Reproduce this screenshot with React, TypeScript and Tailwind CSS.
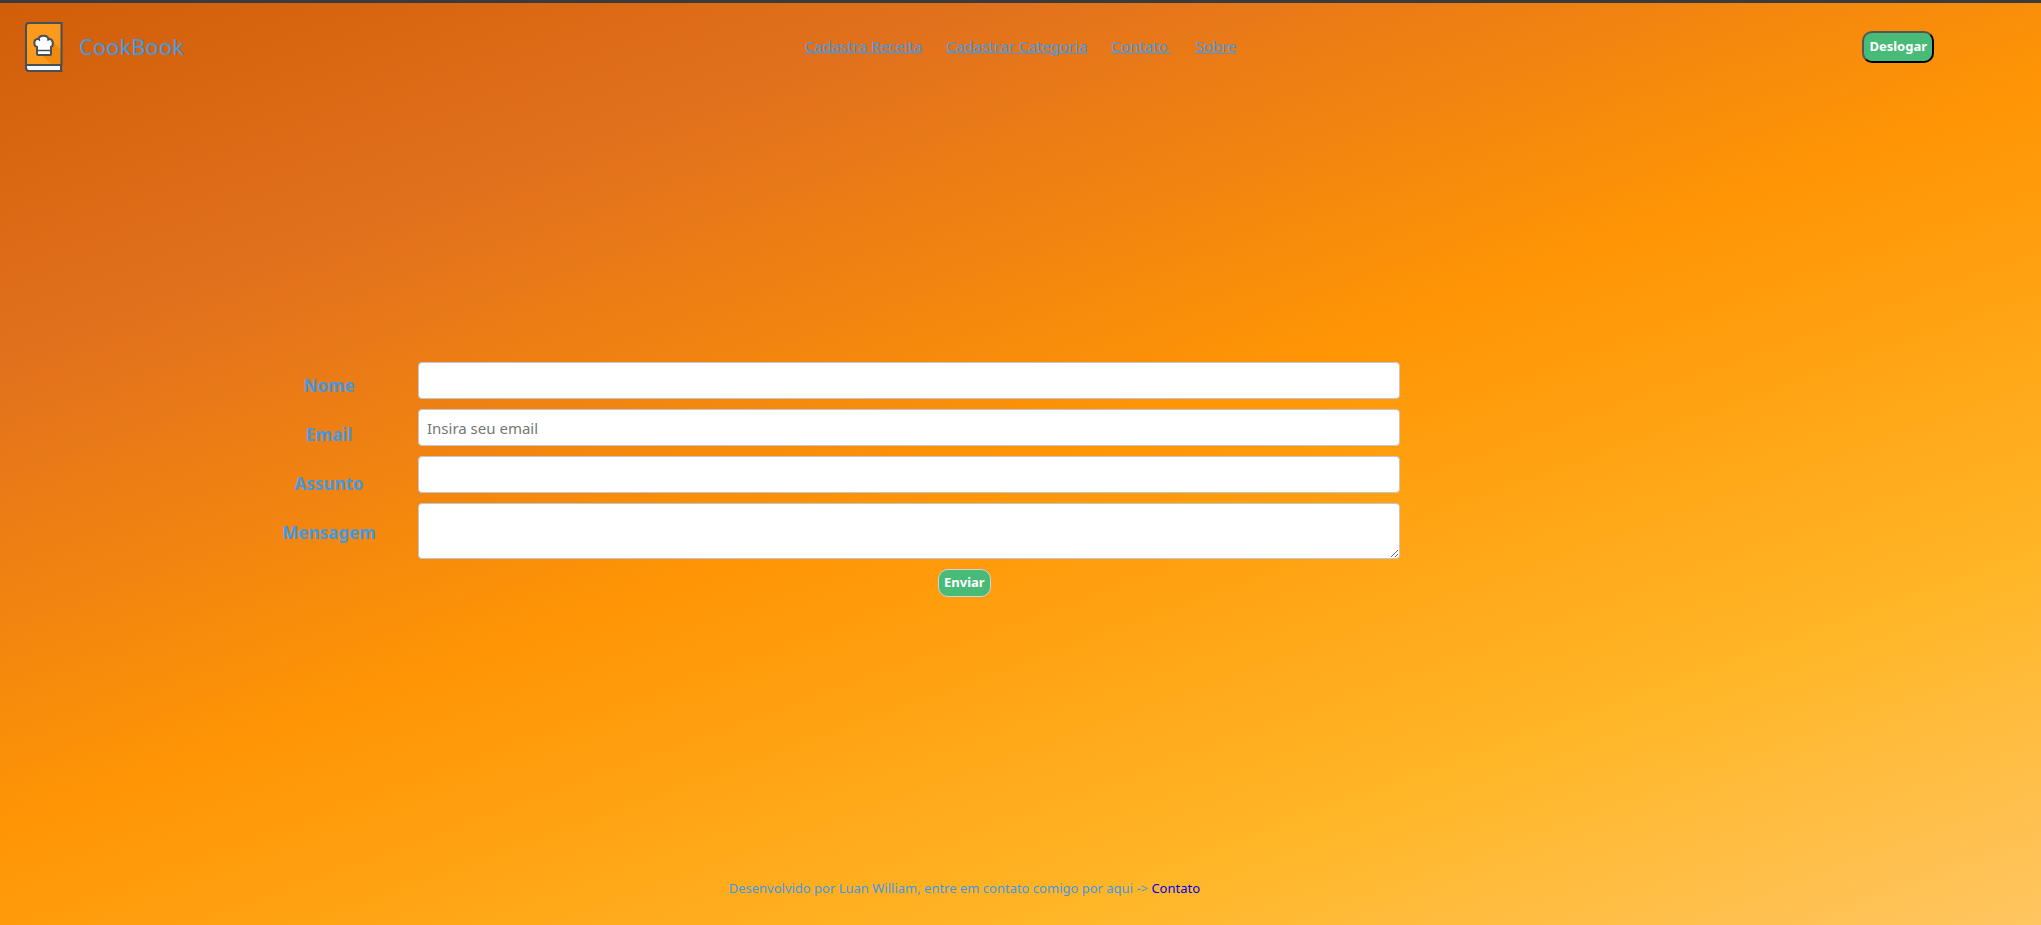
import React from "react";

const links = ["Cadastra Receita", "Cadastrar Categoria", "Contato ", "Sobre"];

const fields = [
  { id: "nome", label: "Nome", type: "text", placeholder: "" },
  { id: "email", label: "Email", type: "email", placeholder: "Insira seu email" },
  { id: "assunto", label: "Assunto", type: "text", placeholder: "" },
];

const inputStyle =
  "block w-full rounded border border-[#c3c7cd] bg-white px-2 text-[15px] text-[#333] placeholder:text-[#757575]";

function BookLogo() {
  return (
    <svg viewBox="0 0 38 50" className="h-[50px] w-[38px]" aria-hidden="true">
      <path d="M4 1H37V49H4Q1 49 1 46V4Q1 1 4 1Z" fill="#fb9a1c" />
      <path d="M18 34L28 20L36 28V42H26Z" fill="#f08a0c" />
      <path d="M2 43H36V48H4Q2 48 2 46Z" fill="#f7f7f7" />
      <path
        d="M37.500 1H4Q1 1 1 4V46Q1 49 4 49H37.500M36.500 1V43.500M1 43H37M36 43V49"
        fill="none"
        stroke="#455059"
        strokeWidth="2"
      />
      <path
        d="M12 32V25C8 23.500 8.500 16.500 13.500 17C14.500 12.500 22.500 12.500 23.500 17C28.500 16.500 29 23.500 26 25V32Q26 33 25 33H13Q12 33 12 32Z"
        fill="#fff"
        stroke="#455059"
        strokeWidth="2"
      />
      <path d="M12 28.500H26M14.500 17V19M23 17V19" fill="none" stroke="#455059" strokeWidth="1.300" />
    </svg>
  );
}

export default function App() {
  return (
    <div className="flex min-h-screen flex-col border-t-[3px] border-[#3b3b3b] bg-[linear-gradient(160deg,#cc5803_-6%,#e2711d_22%,#ff9505_50%,#ffb627_78%,#ffc971_106%)] bg-origin-border font-['Noto_Sans',sans-serif] text-[#4299e1]">
      <header className="grid h-[88px] grid-cols-[1fr_auto_1fr] items-center">
        <a href="#" className="flex items-center gap-4 pl-[25px] text-[22px] leading-7">
          <BookLogo />
          <span className="pb-0.5">CookBook</span>
        </a>
        <nav className="flex gap-6 pb-0.5 text-[15px] leading-5">
          {links.map((link) => (
            <a key={link} href="#" className="whitespace-pre underline decoration-1 underline-offset-1">
              {link}
            </a>
          ))}
        </nav>
        <div className="flex justify-end pr-[107px]">
          <button
            type="button"
            className="h-8 rounded-[10px] border-2 border-t-[#555] border-r-black border-b-black border-l-[#555] bg-[#48bb78] px-[5px] text-[13px] font-bold text-white"
          >
            Deslogar
          </button>
        </div>
      </header>

      <main className="flex flex-1 flex-col justify-center pb-2.5">
        <form onSubmit={(event) => event.preventDefault()}>
          <div className="flex gap-[9px] pr-[31.4%] pl-[12.2%]">
            <div className="flex w-40 shrink-0 flex-col text-center text-[17px] font-bold">
              {fields.map((field) => (
                <label key={field.id} htmlFor={field.id} className="h-[49px] leading-[48px]">
                  {field.label}
                </label>
              ))}
              <label htmlFor="mensagem" className="h-[49px] leading-[48px]">
                Mensagem
              </label>
            </div>
            <div className="flex flex-1 flex-col gap-2.5">
              {fields.map((field) => (
                <input
                  key={field.id}
                  id={field.id}
                  type={field.type}
                  placeholder={field.placeholder}
                  className={`${inputStyle} h-[37px]`}
                />
              ))}
              <textarea id="mensagem" className={`${inputStyle} h-14 resize`} />
            </div>
          </div>
          <div className="flex w-[94.5%] justify-center pt-2.5">
            <button
              type="submit"
              className="h-7 rounded-[10px] border border-[#cbd5e0] bg-[#48bb78] px-[5px] text-[13px] font-bold text-white"
            >
              Enviar
            </button>
          </div>
        </form>
      </main>

      <footer className="w-[94.5%] pb-[27px] text-center text-[13px] leading-5">
        Desenvolvido por Luan William, entre em contato comigo por aqui -&gt;{" "}
        <a href="#" className="text-[#0000ee]">
          Contato
        </a>
      </footer>
    </div>
  );
}
